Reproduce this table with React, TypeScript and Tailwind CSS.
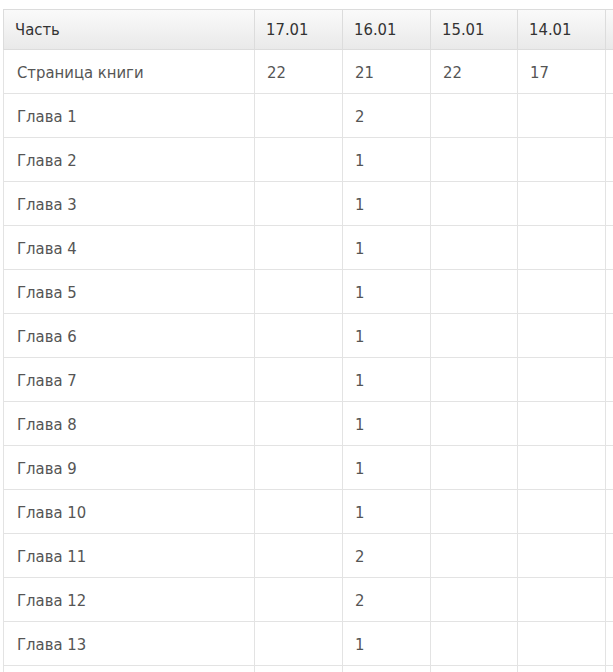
import React from 'react'

const dates = ['17.01', '16.01', '15.01', '14.01', '']

const rows: { name: string, vals: (string | number)[] }[] = [
    { name: 'Страница книги', vals: [22, 21, 22, 17, ''] },
    { name: 'Глава 1', vals: ['', 2, '', '', ''] },
    { name: 'Глава 2', vals: ['', 1, '', '', ''] },
    { name: 'Глава 3', vals: ['', 1, '', '', ''] },
    { name: 'Глава 4', vals: ['', 1, '', '', ''] },
    { name: 'Глава 5', vals: ['', 1, '', '', ''] },
    { name: 'Глава 6', vals: ['', 1, '', '', ''] },
    { name: 'Глава 7', vals: ['', 1, '', '', ''] },
    { name: 'Глава 8', vals: ['', 1, '', '', ''] },
    { name: 'Глава 9', vals: ['', 1, '', '', ''] },
    { name: 'Глава 10', vals: ['', 1, '', '', ''] },
    { name: 'Глава 11', vals: ['', 2, '', '', ''] },
    { name: 'Глава 12', vals: ['', 2, '', '', ''] },
    { name: 'Глава 13', vals: ['', 1, '', '', ''] },
    // next row only peeks in at the bottom edge
    { name: '', vals: ['', '', '', '', ''] },
]

const App: React.FC = () => {
    return (
        <div className="w-[613px] h-[672px] overflow-hidden bg-white pt-[9px] pl-[3px]" style={{ fontFamily: '"DejaVu Sans Condensed", "DejaVu Sans", sans-serif' }}>
            <table className="border-collapse table-fixed w-[690px] text-[16.5px]">
                <colgroup>
                    <col className="w-[251px]" />
                    <col className="w-[88px]" />
                    <col className="w-[88px]" />
                    <col className="w-[87px]" />
                    <col className="w-[88px]" />
                    <col className="w-[88px]" />
                </colgroup>
                <thead>
                    <tr className="h-[40px] bg-gradient-to-b from-[#fafafa] to-[#e9e9e9]">
                        <th className="border border-[#dcdcdc] text-left font-normal text-[#333] pl-[11px] pt-[2px]">Часть</th>
                        {dates.map((d, i) => (
                            <th key={i} className="border border-[#dcdcdc] text-left font-normal text-[#333] pl-[11px] pt-[2px]">{d}</th>
                        ))}
                    </tr>
                </thead>
                <tbody>
                    {rows.map((r, idx) => (
                        <tr key={idx} className="h-[44px]">
                            <td className="border border-[#e3e3e3] text-[#555] pl-[13px] pt-[3px]">{r.name}</td>
                            {r.vals.map((v, i) => (
                                <td key={i} className="border border-[#e3e3e3] text-[#555] pl-[12px] pt-[3px]">{v}</td>
                            ))}
                        </tr>
                    ))}
                </tbody>
            </table>
        </div>
    )
}

export default App
